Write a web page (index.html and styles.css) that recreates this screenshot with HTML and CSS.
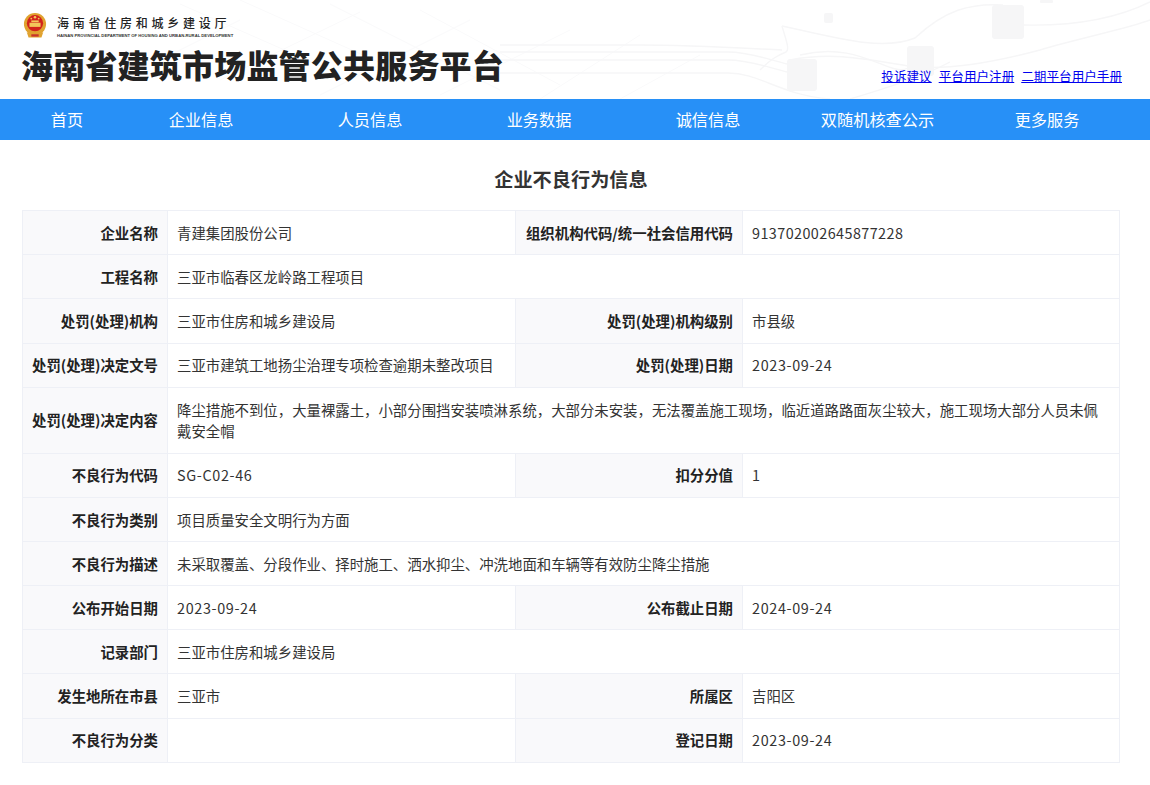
FILE: index.html
```html
<!DOCTYPE html>
<html lang="zh-CN">
<head>
<meta charset="utf-8">
<title>企业不良行为信息</title>
<link rel="stylesheet" href="styles.css">
</head>
<body>
<header class="top">
  <svg class="top-art" viewBox="0 0 1150 99" aria-hidden="true">
    <g fill="none" stroke="#fafafb" stroke-width="1">
      <path d="M180 4L330 70M240 0L430 85M330 4L500 90M420 10L560 85M160 60L240 20M220 80L360 12M320 95L470 20M440 95L570 30M540 99L640 35M620 99L700 55"/>
    </g>
    <g fill="none" stroke="#f6f6f7" stroke-width="1.4">
      <path d="M500 45H640C690 45 740 48 782 50"/>
      <path d="M500 52H728C750 52 770 60 787 64"/>
      <path d="M500 60H728C750 60 770 68 787 72"/>
      <path d="M500 73H728C760 73 780 95 830 99"/>
      <path d="M782 26C786 40 790 50 786 52C776 56 770 60 760 70"/>
      <path d="M782 26C830 36 880 52 915 38C945 10 970 3 1003 5"/>
      <path d="M790 60C830 52 860 58 908 66C950 72 1010 58 1040 50C1080 38 1130 28 1150 20"/>
      <path d="M800 55C860 40 890 78 908 68M850 99C880 90 920 78 950 62"/>
      <path d="M1022 25C1060 26 1110 22 1150 2"/>
    </g>
    <g fill="#f6f6f7">
      <rect x="787" y="59" width="30" height="32" rx="3"/>
      <rect x="907" y="46" width="27" height="30" rx="3"/>
      <rect x="992" y="5" width="32" height="34" rx="3"/>
      <rect x="824" y="13" width="9" height="10" rx="2"/>
      <rect x="1040" y="0" width="13" height="3" rx="1"/>
    </g>
  </svg>
  <div class="brand">
    <div class="dept">
      <svg class="emblem" viewBox="0 0 26 28" aria-hidden="true">
        <circle cx="13" cy="12.5" r="12" fill="#e0a22f"/>
        <circle cx="13" cy="11.5" r="8.8" fill="#d2231c"/>
        <rect x="7" y="11" width="12" height="4.5" fill="#f2c75a"/>
        <rect x="9" y="8.5" width="8" height="2" fill="#f2c75a"/>
        <circle cx="9" cy="6.5" r="1" fill="#f2c75a"/>
        <circle cx="13" cy="5" r="1.4" fill="#f2c75a"/>
        <circle cx="17" cy="6.5" r="1" fill="#f2c75a"/>
        <path d="M4 21C9 24 17 24 22 21L20 27H6Z" fill="#e0a22f"/>
        <path d="M9 23.5H17V26H9Z" fill="#c9332a"/>
      </svg>
      <div class="dept-names">
        <div class="dept-cn">海南省住房和城乡建设厅</div>
        <div class="dept-en">HAINAN PROVINCIAL DEPARTMENT OF HOUSING AND URBAN-RURAL DEVELOPMENT</div>
      </div>
    </div>
    <h1 class="site-title">海南省建筑市场监管公共服务平台</h1>
  </div>
  <nav class="top-links">
    <a href="#">投诉建议</a>
    <a href="#">平台用户注册</a>
    <a href="#">二期平台用户手册</a>
  </nav>
</header>
<nav class="main-nav">
  <a href="#">首页</a>
  <a href="#">企业信息</a>
  <a href="#">人员信息</a>
  <a href="#">业务数据</a>
  <a href="#">诚信信息</a>
  <a href="#">双随机核查公示</a>
  <a href="#">更多服务</a>
</nav>
<main class="content">
  <h2 class="page-title">企业不良行为信息</h2>
  <table class="info">
    <colgroup>
      <col class="c-label"><col class="c-value"><col class="c-label2"><col class="c-value2">
    </colgroup>
    <tbody>
      <tr><th>企业名称</th><td>青建集团股份公司</td><th>组织机构代码/统一社会信用代码</th><td class="digits">913702002645877228</td></tr>
      <tr><th>工程名称</th><td colspan="3">三亚市临春区龙岭路工程项目</td></tr>
      <tr><th>处罚(处理)机构</th><td>三亚市住房和城乡建设局</td><th>处罚(处理)机构级别</th><td>市县级</td></tr>
      <tr><th>处罚(处理)决定文号</th><td>三亚市建筑工地扬尘治理专项检查逾期未整改项目</td><th>处罚(处理)日期</th><td class="code">2023-09-24</td></tr>
      <tr><th>处罚(处理)决定内容</th><td colspan="3">降尘措施不到位，大量裸露土，小部分围挡安装喷淋系统，大部分未安装，无法覆盖施工现场，临近道路路面灰尘较大，施工现场大部分人员未佩戴安全帽</td></tr>
      <tr><th>不良行为代码</th><td class="code">SG-C02-46</td><th>扣分分值</th><td class="digits">1</td></tr>
      <tr><th>不良行为类别</th><td colspan="3">项目质量安全文明行为方面</td></tr>
      <tr><th>不良行为描述</th><td colspan="3">未采取覆盖、分段作业、择时施工、洒水抑尘、冲洗地面和车辆等有效防尘降尘措施</td></tr>
      <tr><th>公布开始日期</th><td class="code">2023-09-24</td><th>公布截止日期</th><td class="code">2024-09-24</td></tr>
      <tr><th>记录部门</th><td colspan="3">三亚市住房和城乡建设局</td></tr>
      <tr><th>发生地所在市县</th><td>三亚市</td><th>所属区</th><td>吉阳区</td></tr>
      <tr><th>不良行为分类</th><td></td><th>登记日期</th><td class="code">2023-09-24</td></tr>
    </tbody>
  </table>
</main>
</body>
</html>
```
FILE: styles.css
```css
* { box-sizing: border-box; }
html, body { margin: 0; padding: 0; }
body {
  background: #fff;
  color: #333;
  font-family: "Noto Sans CJK SC", "Noto Sans", sans-serif;
  font-size: 14.4px;
  line-height: 1.5;
}
.top {
  position: relative;
  height: 99px;
  display: flex;
  justify-content: space-between;
  align-items: flex-end;
  padding: 0 28px 0 22px;
  overflow: hidden;
}
.top-art { position: absolute; left: 0; top: 0; width: 1150px; height: 99px; }
.brand, .top-links { position: relative; }
.brand { padding-bottom: 13px; }
.dept { display: flex; align-items: flex-start; gap: 9px; margin-left: 1px; }
.emblem { width: 24px; height: 27px; flex: none; }
.dept-names { padding-top: 4px; margin-left: 1px; }
.dept-cn {
  font-size: 12px;
  line-height: 13px;
  font-weight: 500;
  letter-spacing: 3.75px;
  color: #222;
  white-space: nowrap;
}
.dept-en {
  font-size: 4.2px;
  line-height: 6px;
  margin-top: 4px;
  font-weight: 700;
  color: #333;
  font-family: "Liberation Sans", sans-serif;
  white-space: nowrap;
}
.site-title {
  margin: 3px 0 0 -1px;
  font-size: 32px;
  line-height: 44px;
  letter-spacing: 0.2px;
  font-weight: 900;
  color: #222;
  white-space: nowrap;
}
.top-links {
  display: flex;
  gap: 7px;
  padding-bottom: 14px;
  font-size: 12.6px;
  line-height: 18px;
}
.top-links a { color: #00e; text-decoration: underline; }
.main-nav {
  display: grid;
  grid-template-columns: 134px 134px 204px 134px 204px 135px 204px;
  height: 41px;
  background: #2790f7;
}
.main-nav a {
  color: #fff;
  text-align: center;
  text-decoration: none;
  font-size: 16.2px;
  line-height: 41px;
  white-space: nowrap;
}
.content { padding: 0 30px 0 22px; }
.page-title {
  margin: 0;
  padding: 25px 0 17px;
  text-align: center;
  font-size: 19.2px;
  line-height: 28px;
  font-weight: 700;
  color: #333;
}
.info {
  width: 1097px;
  table-layout: fixed;
  border-collapse: collapse;
  color: #333;
}
.c-label { width: 145px; }
.c-value { width: 348px; }
.c-label2 { width: 227px; }
.c-value2 { width: 377px; }
.info th, .info td {
  border: 1px solid #eef0f6;
  padding: 10.8px 9px;
  font-size: 14.4px;
  line-height: 21.6px;
  vertical-align: middle;
}
.info th {
  background: #f9f9fb;
  text-align: right;
  font-weight: 700;
  color: #222;
  white-space: nowrap;
}
.info td { text-align: left; font-weight: 400; }
.digits { letter-spacing: 0.42px; }
.code { letter-spacing: 0.65px; }
```
